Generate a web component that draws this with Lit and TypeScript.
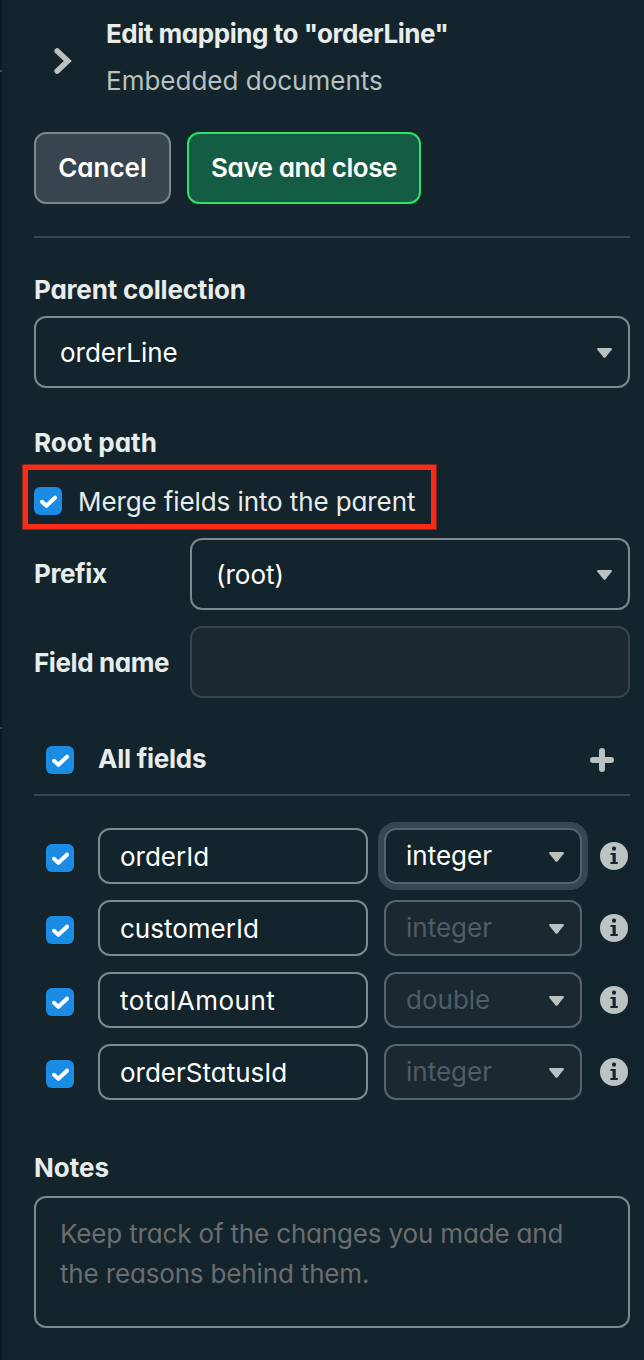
import { LitElement, html, css, svg } from "lit";
import { customElement, property } from "lit/decorators.js";

interface FieldRow {
  name: string;
  type: string;
  active: boolean;
  cls: string;
}

const FIELDS: FieldRow[] = [
  { name: "orderId", type: "integer", active: true, cls: "t-order-id" },
  { name: "customerId", type: "integer", active: false, cls: "t-customer-id" },
  { name: "totalAmount", type: "double", active: false, cls: "t-total" },
  { name: "orderStatusId", type: "integer", active: false, cls: "t-status" },
];

@customElement("check-box")
export class CheckBox extends LitElement {
  static styles = css`
    :host { display: block; width: 28px; height: 28px; flex: none; }
    .box { display: block; width: 28px; height: 28px; border-radius: 6px; background: #1b8ce4; }
  `;
  render() {
    return html`<svg class="box" viewBox="0 0 28 28" fill="none" role="checkbox" aria-checked="true">
      <path d="M8 14.8 12.4 18.8 21 10.7" stroke="#fff" stroke-width="4" stroke-linecap="round" stroke-linejoin="round" />
    </svg>`;
  }
}

@customElement("select-box")
export class SelectBox extends LitElement {
  @property() value = "";
  @property({ reflect: true }) variant = "large";
  static styles = css`
    :host {
      display: flex; align-items: center; justify-content: space-between; box-sizing: border-box;
      height: 72px; padding: 1px 16px 0 24px; border: 2px solid #7c898d; border-radius: 12px; color: #fff;
    }
    :host([variant="small"]), :host([variant="disabled"]) {
      height: 56px; width: 198px; padding: 0 16px 0 20px; border-color: #56656d;
    }
    :host([variant="small"]) { box-shadow: 0 0 0 6px #38464f; }
    :host([variant="disabled"]) { background: #1c2830; color: #4e5d66; }
    .caret { display: block; width: 15px; height: 10px; }
    :host([variant="small"]) .caret, :host([variant="disabled"]) .caret { margin-top: 2px; }
  `;
  render() {
    return html`<span>${this.value}</span>
      <svg class="caret" viewBox="0 0 15 10">
        <path d="M1.2 0H13.8Q15.6 .4 14.6 1.8L8.6 9.2Q7.5 10.5 6.4 9.2L.4 1.8Q-.6 .4 1.2 0Z" fill="#b9c1c1" />
      </svg>`;
  }
}

const infoIcon = svg`
  <circle cx="14" cy="14" r="14" fill="#bcc3c3" />
  <circle cx="14" cy="6.7" r="2.1" fill="#13242c" />
  <path d="M10.5 10.9H15.7V20H17.8V22H10.4V20H12.6V12.9H10.5Z" fill="#13242c" />`;

@customElement("app-root")
export class AppRoot extends LitElement {
  static styles = css`
    :host {
      display: flex; height: 1360px; box-sizing: border-box; overflow: hidden;
      background: #13242c; color: #e8edeb;
      font: 400 26px/40px "Inter", "Liberation Sans", sans-serif;
      font-feature-settings: "cv11" 1;
      white-space: nowrap;
    }
    .edge { flex: none; width: 2px; background: #061c26; }
    .edge-line { height: 2px; background: #3b4a51; }
    .edge-line.first { margin-top: 70px; }
    .edge-line.second { margin-top: 655px; }
    .panel { flex: 1; min-width: 0; padding: 10px 14px 0 32px; }
    .header { display: grid; grid-template-columns: 72px 1fr; align-items: center; line-height: 47px; }
    .chevron { display: block; width: 20px; height: 28px; margin: 8px 0 0 19px; }
    .title { padding-top: 1px; line-height: 46px; font-weight: 700; letter-spacing: -0.46px; }
    .subtitle { color: #b9c1c1; }
    .actions { display: flex; gap: 16px; margin-top: 28px; }
    .btn {
      display: flex; align-items: center; justify-content: center; box-sizing: border-box;
      height: 72px; border: 2px solid #7c878d; border-radius: 12px;
      background: #38454e; color: #fff; font-weight: 600;
    }
    .cancel { width: 137px; }
    .save { width: 234px; border-color: #2de265; background: #155c44; letter-spacing: -0.45px; }
    .divider { height: 2px; margin-top: 32px; background: #36464d; }
    .label { font-weight: 700; }
    .label.parent { margin-top: 32px; letter-spacing: -0.2px; }
    .label.root { margin-top: 35px; }
    .label.notes { margin-top: 48px; }
    .label.prefix { letter-spacing: -0.4px; }
    .label.field-name { padding-top: 1px; letter-spacing: -0.4px; }
    .parent-select { margin-top: 6px; }
    .merge { position: relative; display: flex; align-items: center; gap: 16px; width: 402px; height: 28px; margin-top: 24px; }
    .merge-text { padding-top: 1px; letter-spacing: -0.1px; }
    .highlight { position: absolute; box-sizing: border-box; left: -11px; top: -22px; width: 413px; height: 64px; border: 5px solid #fc2b18; outline: 1px solid #7f2822; outline-offset: -0.5px; }
    .path-grid { display: grid; grid-template-columns: 156px 1fr; row-gap: 16px; align-items: center; margin-top: 23px; }
    .text-disabled { box-sizing: border-box; height: 72px; border: 2px solid #36444c; border-radius: 12px; background: #1c2830; }
    .all { display: flex; align-items: center; height: 28px; margin-top: 48px; padding: 0 16px 20px 12px; border-bottom: 2px solid #36464d; }
    .all-label { flex: 1; margin: -3px 0 0 24px; font-weight: 700; letter-spacing: -0.25px; }
    .plus { display: block; width: 24px; height: 24px; }
    .rows { display: grid; row-gap: 16px; margin-top: 32px; }
    .row { display: grid; grid-template-columns: 52px 270px 198px 28px; align-items: center; padding-left: 12px; }
    .row .type { margin-left: 16px; }
    .row .info { display: block; width: 28px; height: 28px; margin-left: 34px; }
    .row .tick { margin-top: 4px; }
    .input { display: flex; align-items: center; box-sizing: border-box; height: 56px; border: 2px solid #7c898d; border-radius: 12px; padding: 2px 0 0 20px; color: #fff; }
    .t-total { letter-spacing: 0.5px; }
    .note { box-sizing: border-box; height: 132px; margin-top: 8px; padding: 16px 24px; border: 2px solid #7c898d; border-radius: 12px; color: #6b6e6f; letter-spacing: -0.16px; }
  `;

  render() {
    return html`
      <div class="edge"><div class="edge-line first"></div><div class="edge-line second"></div></div>
      <main class="panel">
        <header class="header">
          <svg class="chevron" viewBox="0 0 20 28" fill="none">
            <path d="M4.2 4 14.8 14 4.2 24" stroke="#b9c1c1" stroke-width="5.6" stroke-linecap="round" />
          </svg>
          <div>
            <div class="title">Edit mapping to "orderLine"</div>
            <div class="subtitle">Embedded documents</div>
          </div>
        </header>
        <div class="actions">
          <div class="btn cancel">Cancel</div>
          <div class="btn save">Save and close</div>
        </div>
        <div class="divider"></div>
        <div class="label parent">Parent collection</div>
        <select-box class="parent-select" value="orderLine"></select-box>
        <div class="label root">Root path</div>
        <div class="merge">
          <check-box></check-box>
          <span class="merge-text">Merge fields into the parent</span>
          <div class="highlight"></div>
        </div>
        <div class="path-grid">
          <div class="label prefix">Prefix</div>
          <select-box value="(root)"></select-box>
          <div class="label field-name">Field name</div>
          <div class="text-disabled"></div>
        </div>
        <div class="all">
          <check-box></check-box>
          <div class="all-label">All fields</div>
          <svg class="plus" viewBox="0 0 24 24" fill="none">
            <path d="M12 3V21M3 12H21" stroke="#b9c1c1" stroke-width="6" stroke-linecap="round" />
          </svg>
        </div>
        <div class="rows">
          ${FIELDS.map((f) => html`
            <div class="row">
              <check-box class="tick"></check-box>
              <div class="input"><span class=${f.cls}>${f.name}</span></div>
              <select-box class="type" variant=${f.active ? "small" : "disabled"} value=${f.type}></select-box>
              <svg class="info" viewBox="0 0 28 28">${infoIcon}</svg>
            </div>`)}
        </div>
        <div class="label notes">Notes</div>
        <div class="note">Keep track of the changes you made and<br />the reasons behind them.</div>
      </main>`;
  }
}
